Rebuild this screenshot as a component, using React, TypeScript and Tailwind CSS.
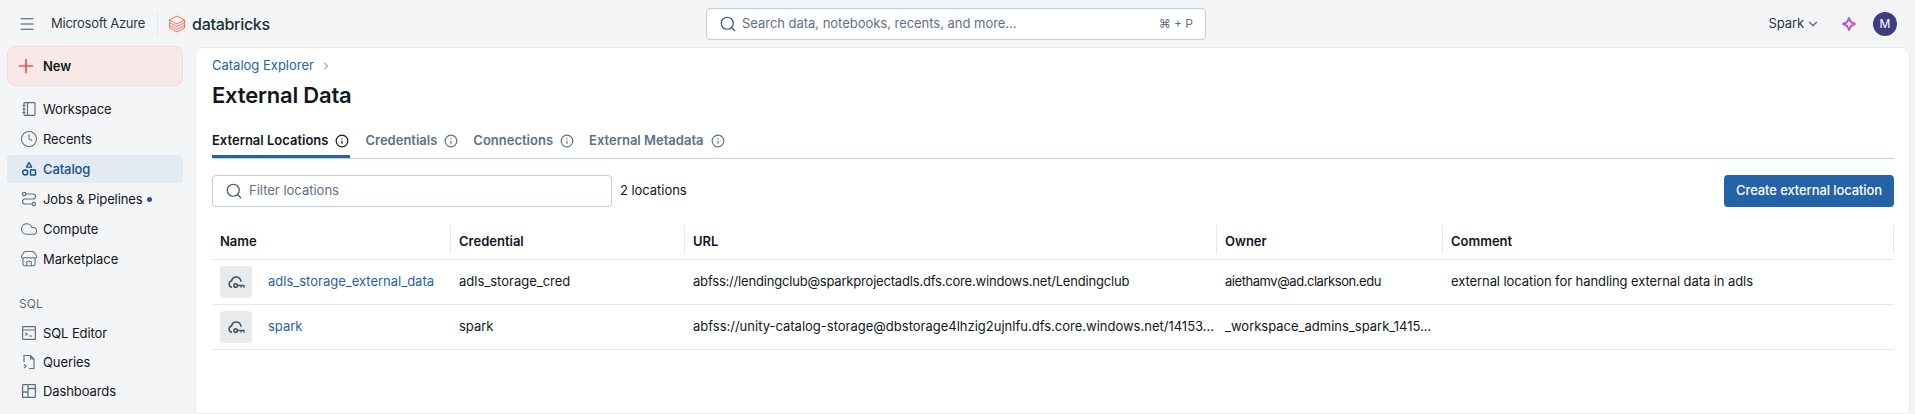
import { Menu, Plus, Clock, Cloud, Store, Search, ChevronRight, ChevronDown, Info } from "lucide-react";
import type { ReactNode } from "react";

const iconCls = "w-4 h-4";
const lucideCls = "w-[18px] h-[18px]";

const WorkspaceIcon = () => (
  <svg viewBox="0 0 16 16" className={iconCls} fill="none" stroke="currentColor" strokeWidth="1.2">
    <rect x="3" y="1.6" width="11" height="12.8" rx="0.8" />
    <path d="M6.5 1.6v12.8M1.5 4.5h3M1.5 8h3M1.5 11.500h3" />
  </svg>
);
const CatalogIcon = () => (
  <svg viewBox="0 0 16 16" className={iconCls} fill="none" stroke="currentColor" strokeWidth="1.4">
    <path d="M8 1.5l2.6 4.600H5.400z" strokeLinejoin="round" />
    <circle cx="4.200" cy="11.500" r="2.500" />
    <rect x="9.500" y="9" width="5" height="5" rx="0.6" />
  </svg>
);
const JobsIcon = () => (
  <svg viewBox="0 0 16 16" className={iconCls} fill="none" stroke="currentColor" strokeWidth="1.2">
    <circle cx="3.200" cy="3" r="1.700" />
    <circle cx="12.800" cy="13" r="1.700" />
    <path d="M5 3h7a2.500 2.500 0 010 5H4a2.500 2.500 0 000 5h7" />
  </svg>
);
const SqlEditorIcon = () => (
  <svg viewBox="0 0 16 16" className={iconCls} fill="none" stroke="currentColor" strokeWidth="1.2">
    <rect x="1.600" y="1.600" width="12.800" height="12.800" rx="0.6" />
    <path d="M1.600 5h12.800M4.500 7.800l1.800 1.400-1.800 1.400M8 11h3" />
  </svg>
);
const QueriesIcon = () => (
  <svg viewBox="0 0 16 16" className={iconCls} fill="none" stroke="currentColor" strokeWidth="1.2">
    <path d="M3 8V1.500h6.500L13 5v9.500H8M9.500 1.500V5H13M3 10.500l2 1.800-2 1.800" />
  </svg>
);
const DashboardIcon = () => (
  <svg viewBox="0 0 16 16" className={iconCls} fill="none" stroke="currentColor" strokeWidth="1.3">
    <rect x="1.600" y="1.600" width="12.800" height="12.800" rx="0.6" />
    <path d="M7 1.600v12.800M1.600 9H7M7 5.500h7.400" />
  </svg>
);
const CloudKeyIcon = () => (
  <svg viewBox="0 0 16 16" className="w-[17px] h-[17px] text-[#445461]" fill="none" stroke="currentColor" strokeWidth="1.4">
    <path d="M3.800 12.500A3 3 0 013.300 6.600 4.500 4.500 0 0111.800 5.400l.6 1.800" />
    <circle cx="7.200" cy="10.800" r="1.700" />
    <path d="M9 10.800h6.500M12.300 10.800v2M15 10.800v2" />
  </svg>
);
const DatabricksLogo = () => (
  <svg viewBox="0 0 18 18" className="w-[18px] h-[18px]" fill="none" stroke="#ff5f46" strokeWidth="0.9" strokeLinejoin="round">
    <path d="M9 1L16.500 5 9 9 1.500 5z" />
    <path d="M1.500 5v2.600L9 11.600l7.500-4V5" />
    <path d="M1.500 7.600v2.800L9 14.400l7.500-4V7.600" />
    <path d="M1.500 10.400V13L9 17l7.500-4v-2.600" />
  </svg>
);
const Sparkle = () => (
  <svg viewBox="0 0 16 16" className="w-[16px] h-[16px]" fill="none" strokeWidth="1.8">
    <defs>
      <linearGradient id="spark" x1="0" y1="0" x2="1" y2="1">
        <stop offset="0" stopColor="#4299e0" />
        <stop offset="0.5" stopColor="#ca42e0" />
        <stop offset="1" stopColor="#ff5f46" />
      </linearGradient>
    </defs>
    <path stroke="url(#spark)" d="M8 1.500c.6 3.600 2.400 5.800 6.500 6.500-4.100.7-5.900 2.900-6.500 6.500-.6-3.600-2.400-5.800-6.500-6.500C5.600 7.300 7.400 5.100 8 1.500z" />
  </svg>
);

function NavItem({ icon, label, active, dot, tight }: { icon: ReactNode; label: string; active?: boolean; dot?: boolean; tight?: boolean }) {
  return (
    <div
      className={`flex items-center h-[28px] rounded pl-[12px] gap-[5px] text-[13px] ${tight ? "mb-[1px]" : "mb-[2px]"} ${
        active ? "bg-[#e4eaf1] text-[#0e538b] font-medium" : "text-[#11171c]"
      }`}
    >
      <span className={`w-[19px] flex justify-center ${active ? "text-[#0e538b]" : "text-[#5f7281]"}`}>{icon}</span>
      <span className="pt-[2px] tracking-[-0.1px]">{label}</span>
      {dot && <span className="w-[5px] h-[5px] rounded-full bg-[#434a93] ml-[-1px]" />}
    </div>
  );
}

function Tab({ label, active }: { label: string; active?: boolean }) {
  return (
    <div
      className={`flex items-center gap-[7px] h-[33px] pt-[1px] font-semibold text-[13px] border-b-[3px] ${
        active ? "border-[#2463a8] text-[#11171c] pr-[1px]" : "border-transparent text-[#5f7281]"
      }`}
    >
      {label}
      <Info className={`w-[14px] h-[14px] ${active ? "text-[#11171c]" : "text-[#5f7281]"}`} strokeWidth={2} />
    </div>
  );
}

const cols = ["w-[239px]", "w-[234px]", "w-[532px]", "w-[226px]", "flex-1"];

const rows = [
  {
    name: "adls_storage_external_data",
    cred: "adls_storage_cred",
    url: "abfss://lendingclub@sparkprojectadls.dfs.core.windows.net/Lendingclub",
    owner: "aiethamv@ad.clarkson.edu",
    comment: "external location for handling external data in adls",
    urlCls: "tracking-[-0.19px]",
    ownerCls: "tracking-[-0.45px]",
  },
  {
    name: "spark",
    cred: "spark",
    url: "abfss://unity-catalog-storage@dbstorage4lhzig2ujnlfu.dfs.core.windows.net/14153…",
    owner: "_workspace_admins_spark_1415…",
    comment: "",
    urlCls: "",
    ownerCls: "",
  },
];

export default function App() {
  return (
    <div className="h-[414px] w-[1915px] overflow-hidden bg-[#f4f5f7] text-[#11171c] font-['Inter',sans-serif] flex flex-col">
      {/* top bar */}
      <header className="h-[47px] shrink-0 flex items-center">
        <div className="w-[700px] flex items-center">
          <Menu className="w-[18px] h-[18px] ml-[18px] text-[#445461]" strokeWidth={1.5} />
          <span className="ml-[15px] text-[13px] tracking-[-0.25px] text-[#2b3741]">Microsoft Azure</span>
          <span className="w-px h-[24px] bg-[#e4e7eb] ml-[12px]" />
          <span className="ml-[10px]"><DatabricksLogo /></span>
          <span className="ml-[6px] text-[16px] font-medium tracking-[-0.3px] text-[#1b3139]">databricks</span>
        </div>
        <div className="w-[500px] ml-[6px] h-[32px] bg-white border border-[#c0cdd8] rounded flex items-center pl-[12px] pr-[12px] text-[13px] text-[#5f7281]">
          <Search className="w-[18px] h-[18px] text-[#445461]" strokeWidth={1.6} />
          <span className="ml-[5px] flex-1 tracking-[-0.03px]">Search data, notebooks, recents, and more...</span>
          <span className="text-[12px]">⌘ + P</span>
        </div>
        <div className="flex-1 flex items-center justify-end pr-[18px]">
          <span className="text-[13px] tracking-[-0.1px] text-[#2b3741]">Spark</span>
          <ChevronDown className="w-[14px] h-[14px] ml-[2px] text-[#5f7281]" strokeWidth={2.4} />
          <span className="ml-[21px]"><Sparkle /></span>
          <span className="ml-[16px] w-[24px] h-[24px] rounded-full bg-[#3f3d82] text-white text-[12px] flex items-center justify-center">M</span>
        </div>
      </header>

      <div className="flex flex-1 min-h-0">
        {/* sidebar */}
        <aside className="w-[195px] shrink-0 pl-[7px] pr-[12px] -mt-px">
          <div className="h-[40px] bg-[#f9e8e8] border border-[#f5d8d8] rounded-lg flex items-center pl-[7px] gap-[6px] text-[13px] font-semibold text-[#11171c] mb-[9px]">
            <Plus className="w-[22px] h-[22px] text-[#f0564d]" strokeWidth={1.9} />
            <span className="pt-[2px]">New</span>
          </div>
          <NavItem icon={<WorkspaceIcon />} label="Workspace" />
          <NavItem icon={<Clock className={lucideCls} strokeWidth={1.4} />} label="Recents" />
          <NavItem icon={<CatalogIcon />} label="Catalog" active />
          <NavItem icon={<JobsIcon />} label="Jobs & Pipelines" dot />
          <NavItem icon={<Cloud className={lucideCls} strokeWidth={1.4} />} label="Compute" />
          <NavItem icon={<Store className={lucideCls} strokeWidth={1.4} />} label="Marketplace" />
          <div className="h-[20px] mt-[21px] mb-[5px] pl-[12px] text-[12px] text-[#5f7281] flex items-center">SQL</div>
          <NavItem icon={<SqlEditorIcon />} label="SQL Editor" tight />
          <NavItem icon={<QueriesIcon />} label="Queries" tight />
          <NavItem icon={<DashboardIcon />} label="Dashboards" tight />
        </aside>

        {/* main card */}
        <main className="w-[1715px] bg-white border border-[#e8ebee] rounded-t-lg pt-[8px] pl-[16px] pr-[15px]">
          <div className="flex items-center gap-[6px] text-[13px] h-[20px] text-[#2463a8]">
            Catalog Explorer
            <ChevronRight className="w-[12px] h-[12px] text-[#5f7281]" />
          </div>
          <h1 className="text-[22px] leading-[28px] font-semibold mt-[5px] tracking-[-0.2px]">External Data</h1>

          <div className="flex gap-[15px] mt-[16px] border-b border-[#c0cdd8] h-[34px]">
            <Tab label="External Locations" active />
            <Tab label="Credentials" />
            <Tab label="Connections" />
            <Tab label="External Metadata" />
          </div>

          <div className="flex items-center mt-[16px]">
            <div className="w-[400px] h-[32px] border border-[#c0cdd8] rounded flex items-center pl-[12px] gap-[6px] text-[13px] text-[#5f7281]">
              <Search className="w-[18px] h-[18px] text-[#445461]" strokeWidth={1.6} />
              Filter locations
            </div>
            <span className="ml-[8px] text-[13px] tracking-[-0.05px]">2 locations</span>
            <button className="ml-auto h-[32px] w-[170px] bg-[#2463a8] text-white text-[13px] tracking-[-0.1px] font-medium rounded">
              Create external location
            </button>
          </div>

          {/* table */}
          <div className="mt-[18px]">
            <div className="flex h-[35px] border-b border-[#e4e7eb] text-[13px] font-semibold pb-[5px]">
              {["Name", "Credential", "URL", "Owner", "Comment"].map((h, i) => (
                <div key={h} className={`${cols[i]} px-[8px] pt-[4px] flex items-center border-r border-[#e4e7eb]`}>
                  {h}
                </div>
              ))}
            </div>
            {rows.map((r) => (
              <div key={r.name} className="flex h-[45px] border-b border-[#e4e7eb] text-[13px] items-center">
                <div className={`${cols[0]} pl-[8px] flex items-center gap-[16px] text-[#2463a8]`}>
                  <span className="w-[32px] h-[32px] rounded bg-[#e8ebee] flex items-center justify-center">
                    <CloudKeyIcon />
                  </span>
                  {r.name}
                </div>
                <div className={`${cols[1]} px-[8px]`}>{r.cred}</div>
                <div className={`${cols[2]} px-[8px] whitespace-nowrap ${r.urlCls}`}>{r.url}</div>
                <div className={`${cols[3]} px-[8px] whitespace-nowrap ${r.ownerCls}`}>{r.owner}</div>
                <div className={`${cols[4]} px-[8px] tracking-[-0.08px]`}>{r.comment}</div>
              </div>
            ))}
          </div>
        </main>
      </div>
    </div>
  );
}
